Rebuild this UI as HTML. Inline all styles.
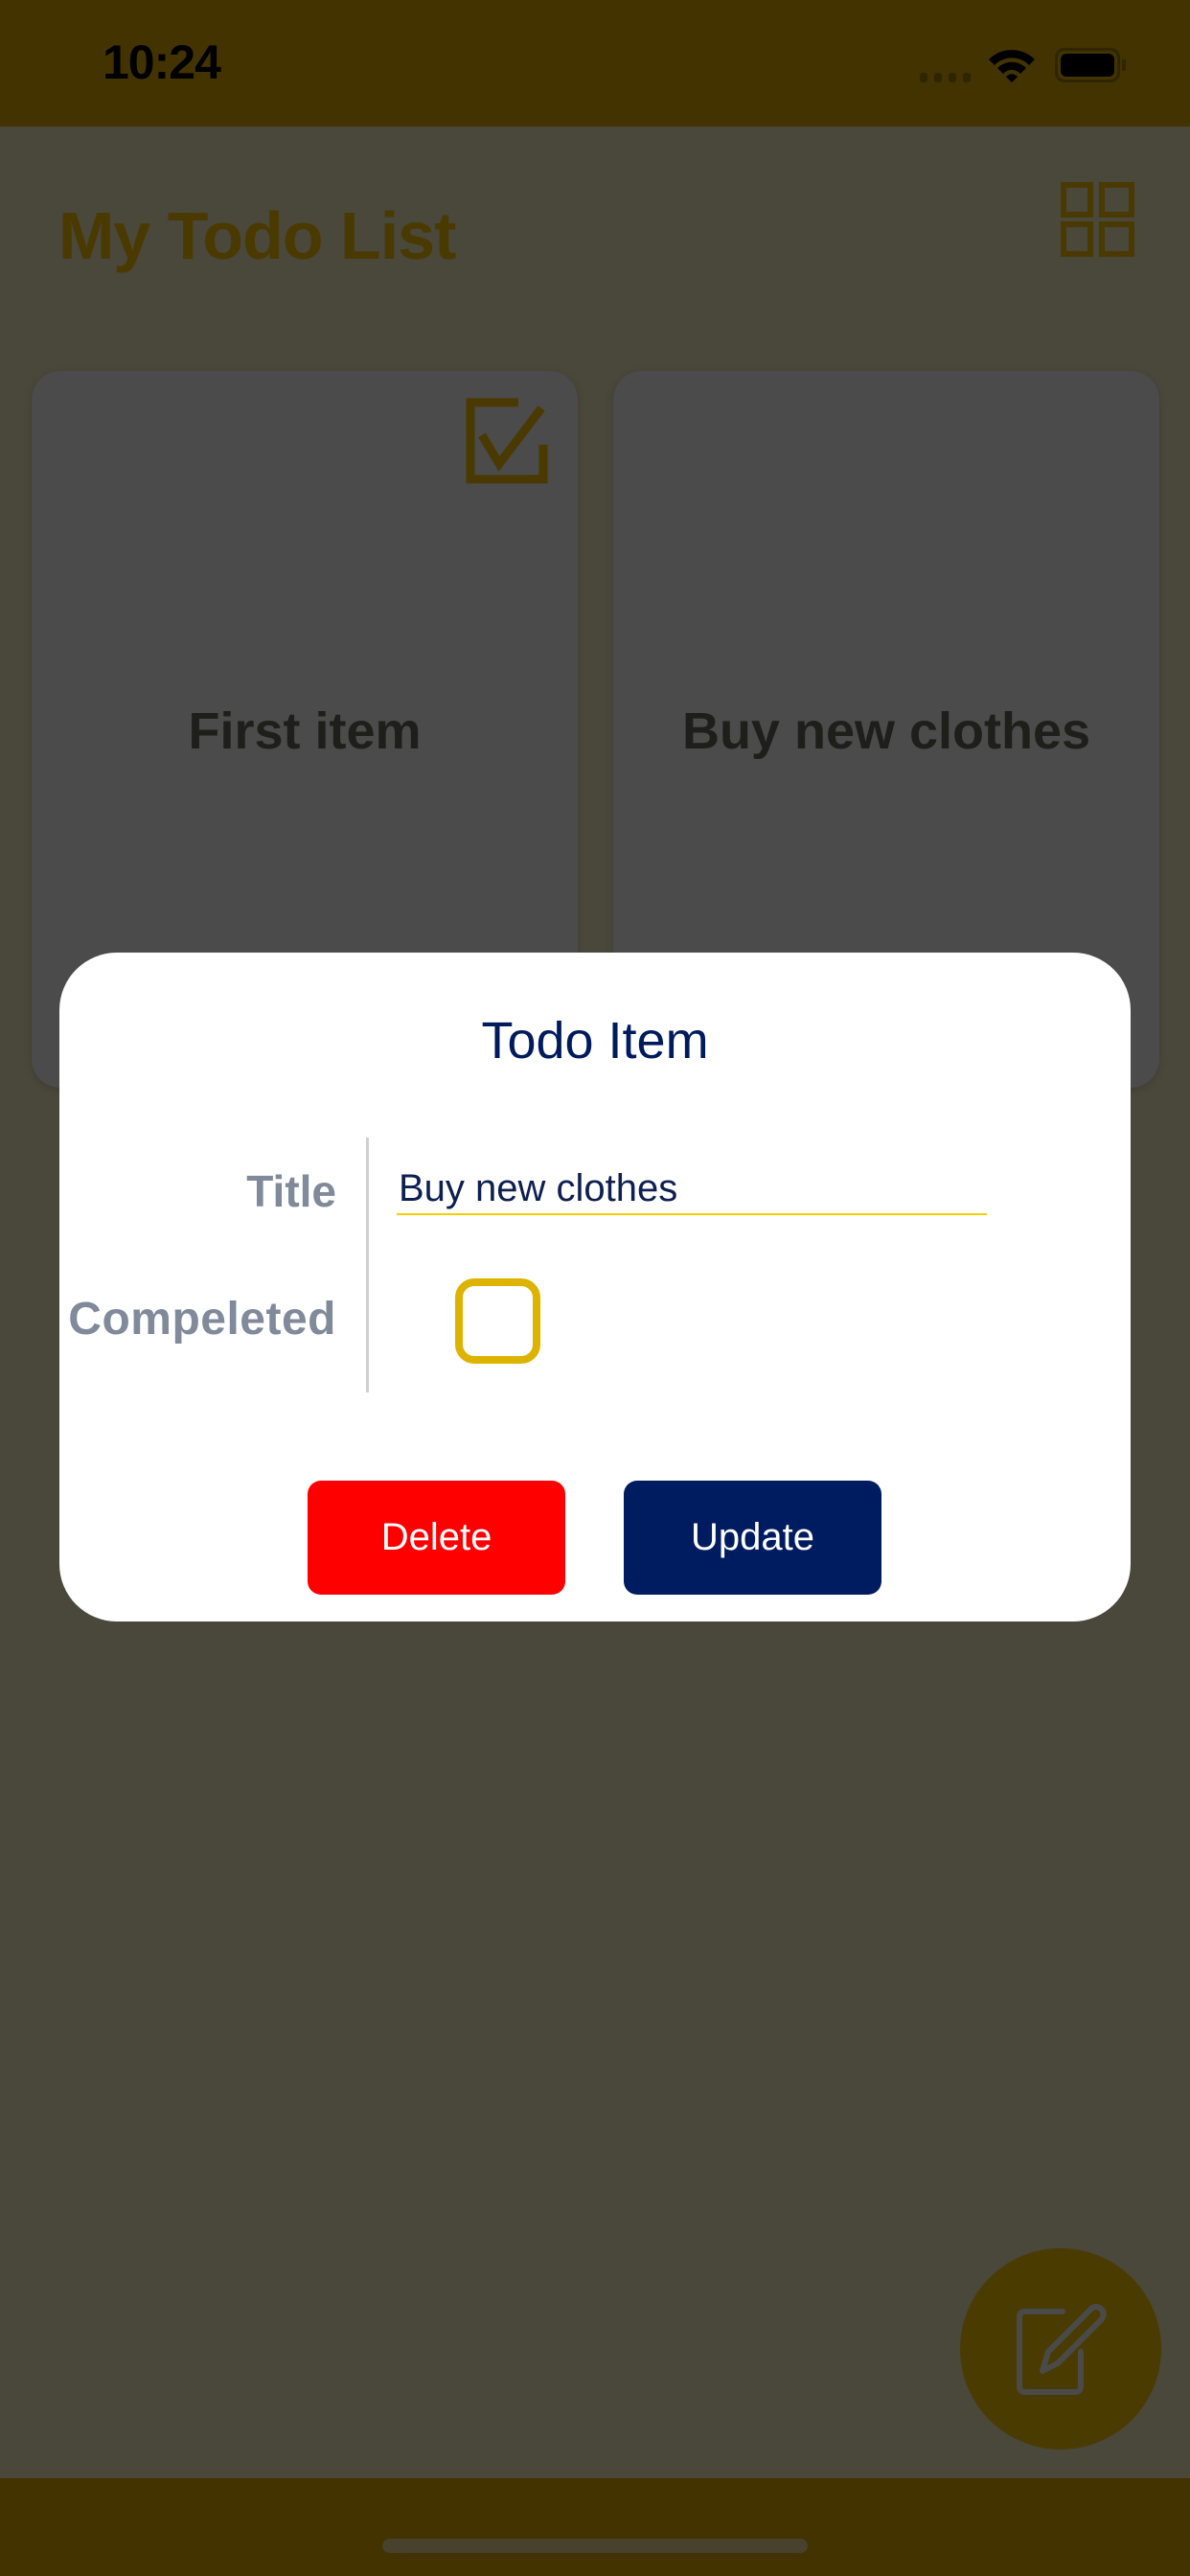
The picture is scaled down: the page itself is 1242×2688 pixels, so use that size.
<!DOCTYPE html>
<html><head><meta charset="utf-8"><style>
*{margin:0;padding:0;box-sizing:border-box}
body{width:1242px;height:2688px;background:#4a473b;position:relative;overflow:hidden;font-family:"Liberation Sans",sans-serif}
.abs{position:absolute}
.card{position:absolute;top:387px;width:570px;height:748px;background:#4b4b4b;border-radius:30px;box-shadow:0 2px 8px rgba(0,0,0,.15)}
.ct{position:absolute;left:0;right:0;top:343px;text-align:center;font-weight:bold;font-size:54px;color:#1e1e1a;line-height:66px}
.btn{position:absolute;top:1545px;width:269px;height:119px;border-radius:14px;color:#fff;font-size:40px;text-align:center;line-height:119px}
</style></head><body>
<div class="abs" style="left:0;top:0;width:1242px;height:132px;background:#423300"></div>
<div class="abs" style="left:107px;top:36px;font-size:50px;font-weight:bold;color:#000;letter-spacing:-1px">10:24</div>
<div class="abs" style="left:960px;top:76px;width:8px;height:10px;background:#2e2600;border-radius:3px"></div>
<div class="abs" style="left:975px;top:76px;width:8px;height:10px;background:#2e2600;border-radius:3px"></div>
<div class="abs" style="left:990px;top:76px;width:8px;height:10px;background:#2e2600;border-radius:3px"></div>
<div class="abs" style="left:1005px;top:76px;width:8px;height:10px;background:#2e2600;border-radius:3px"></div>
<svg class="abs" style="left:1030px;top:48px" width="52" height="40" viewBox="0 0 52 40"><path d="M2 14 A34 34 0 0 1 50 14 L44 20 A25 25 0 0 0 8 20Z M11 23 A21 21 0 0 1 41 23 L35 29 A12 12 0 0 0 17 29Z M20 32 A8 8 0 0 1 32 32 L26 38Z" fill="#000"/></svg>
<div class="abs" style="left:1101px;top:50px;width:68px;height:36px;border:3px solid #2e2600;border-radius:10px;padding:3px"><div style="width:100%;height:100%;background:#000;border-radius:6px"></div></div>
<div class="abs" style="left:1171px;top:62px;width:4px;height:12px;background:#2e2600;border-radius:2px"></div>

<div class="abs" style="left:61px;top:206px;font-size:70px;font-weight:bold;color:#4a3a00;letter-spacing:-1px">My Todo List</div>
<svg class="abs" style="left:1107px;top:190px" width="78" height="78" viewBox="0 0 78 78" fill="none" stroke="#4a3a00" stroke-width="6"><rect x="3" y="3" width="28" height="31"/><rect x="43" y="3" width="31" height="31"/><rect x="3" y="44" width="28" height="31"/><rect x="43" y="44" width="31" height="31"/></svg>

<div class="card" style="left:33px"><div class="ct">First item</div>
<svg class="abs" style="left:448px;top:27px" width="96" height="96" viewBox="0 0 96 96" fill="none" stroke="#4a3a00" stroke-width="9"><path d="M60 6 H10 V86 H86 V50"/><path d="M22 40 L40 70 L84 12"/></svg></div>
<div class="card" style="left:640px"><div class="ct">Buy new clothes</div></div>

<div class="abs" style="left:62px;top:994px;width:1118px;height:698px;background:#fff;border-radius:60px"></div>
<div class="abs" style="left:62px;top:1055px;width:1118px;text-align:center;font-size:54px;color:#001a5e">Todo Item</div>
<div class="abs" style="left:40px;top:1216px;width:311px;text-align:right;font-size:46px;font-weight:bold;color:#808a9a">Title</div>
<div class="abs" style="left:40px;top:1349px;width:311px;text-align:right;font-size:48px;font-weight:bold;color:#808a9a;letter-spacing:0.5px">Compeleted</div>
<div class="abs" style="left:382px;top:1187px;width:3px;height:266px;background:#d0d0d0"></div>
<div class="abs" style="left:416px;top:1218px;font-size:40px;color:#0e1f50">Buy new clothes</div>
<div class="abs" style="left:414px;top:1266px;width:616px;height:2px;background:#f5d000"></div>
<div class="abs" style="left:475px;top:1334px;width:89px;height:89px;border:8px solid #deb300;border-radius:20px"></div>
<div class="btn" style="left:321px;background:#ff0000">Delete</div>
<div class="btn" style="left:651px;background:#001c60">Update</div>

<div class="abs" style="left:1002px;top:2346px;width:210px;height:210px;border-radius:50%;background:#4a3c00"></div>
<svg class="abs" style="left:1058px;top:2402px" width="100" height="98" viewBox="0 0 100 98" fill="none" stroke="#4a4a4a" stroke-width="6" stroke-linecap="round" stroke-linejoin="round"><path d="M51 10 H12 Q6 10 6 16 V88 Q6 94 12 94 H64 Q70 94 70 88 V52"/><path d="M30 72 L36 52 L80 8 Q86 2 92 8 Q96 14 90 20 L46 64 Z"/></svg>

<div class="abs" style="left:0;top:2586px;width:1242px;height:102px;background:#423300"></div>
<div class="abs" style="left:399px;top:2649px;width:444px;height:15px;border-radius:8px;background:#48412e"></div>
</body></html>
